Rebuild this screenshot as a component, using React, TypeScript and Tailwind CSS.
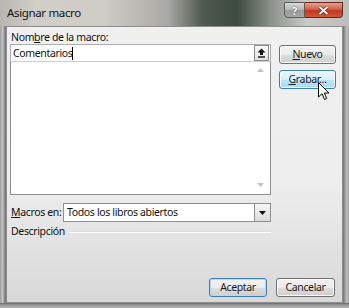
import React from "react";

const font = { fontFamily: '"Noto Sans", "Open Sans", sans-serif', letterSpacing: "-0.35px" };

function Btn({ children, variant = "normal", className = "" }: { children: React.ReactNode; variant?: "normal" | "hover" | "default"; className?: string }) {
  const base = "flex items-center justify-center rounded-[3px] text-[10.5px] text-[#1a1a1a] h-[19px] whitespace-nowrap";
  const v =
    variant === "hover"
      ? "border border-[#3c7fb1] bg-[linear-gradient(#eaf6fd_0%,#d9f0fc_50%,#bee6fd_51%,#a7d9f5_100%)] shadow-[inset_0_0_0_1px_#f4fbfe]"
      : variant === "default"
      ? "border border-[#3c7fb1] bg-[linear-gradient(#f2f2f2_0%,#ebebeb_50%,#dddddd_51%,#cfcfcf_100%)] shadow-[inset_0_0_0_1px_#aedbf1]"
      : "border border-[#707070] bg-[linear-gradient(#f2f2f2_0%,#ebebeb_50%,#dddddd_51%,#cfcfcf_100%)] shadow-[inset_0_0_0_1px_#fcfcfc]";
  return <div className={`${base} ${v} ${className}`}>{children}</div>;
}

export default function App() {
  return (
    <div className="w-[349px] h-[308px] overflow-hidden relative flex flex-col bg-[linear-gradient(90deg,#b8b6b2_0%,#d2cec8_10%,#cfcbc5_30%,#a9a9a5_48%,#4f5a50_58%,#3d4a40_68%,#8d958d_78%,#c9c9c7_88%,#bdbdbd_100%)]" style={font}>
      {/* Title bar */}
      <div className="h-[26px] flex items-start relative">
        <div className="pl-[7px] pt-[5px] text-[11.5px] leading-[16px] text-[#111]">Asignar macro</div>
        <div className="flex-1" />
        <div className="flex mt-[2px] mr-[6px]">
          <div className="w-[21px] h-[16px] rounded-bl-[4px] border border-[#5a5a5a] bg-[linear-gradient(#d8d8d8_0%,#b8b8b8_50%,#9a9a9a_51%,#a8a8a8_100%)] flex items-center justify-center text-white text-[11px] font-bold leading-none" style={{ textShadow: "0 0 2px #333" }}>?</div>
          <div className="w-[38px] h-[16px] rounded-br-[4px] border border-l-0 border-[#6b2518] bg-[linear-gradient(#e8a08e_0%,#d06048_45%,#c0391f_55%,#d2553a_100%)] flex items-center justify-center">
            <svg width="11" height="9" viewBox="0 0 11 9">
              <path d="M1.5 1 L9.5 8 M9.5 1 L1.5 8" stroke="#5a1a10" strokeWidth="3.2" />
              <path d="M1.5 1 L9.5 8 M9.5 1 L1.5 8" stroke="#fff" strokeWidth="2" />
            </svg>
          </div>
        </div>
      </div>

      <div className="flex flex-1">
        {/* left frame */}
        <div className="w-[6px] bg-[linear-gradient(90deg,#9a9a9a,#c4c4c4_40%,#8a8a8a_80%,#6c6c6c)]" />
        {/* client */}
        <div className="flex-1 flex flex-col border border-[#8e8e8e] bg-[linear-gradient(#f0f0f0_0%,#eeeeee_55%,#d8d8d8_100%)] px-[3px] pt-[3px] pb-[5px] relative">
          <div className="flex">
            {/* left column */}
            <div className="w-[261px] flex flex-col">
              <div className="h-[14px] leading-[14px] text-[10.5px] text-[#111] pl-[1px] whitespace-nowrap">
                Nom<span className="underline">b</span>re de la macro:
              </div>
              {/* input */}
              <div className="h-[18px] border border-[#abadb3] bg-white flex items-center relative">
                <span className="pl-[2px] text-[10.5px] text-[#111] leading-none">Comentarios</span>
                <span className="w-[1px] h-[13px] bg-black" />
                <div className="absolute right-[1px] top-[0px] w-[15px] h-[16px] border border-[#8a8a8a] bg-[linear-gradient(#fafafa,#e2e2e2)] flex items-center justify-center">
                  <svg width="9" height="10" viewBox="0 0 9 10">
                    <path d="M4.5 0.5 L8.5 4.5 L6 4.5 L6 7 L3 7 L3 4.5 L0.5 4.5 Z" fill="#111" />
                    <rect x="1" y="8.3" width="7" height="1.4" fill="#111" />
                  </svg>
                </div>
              </div>
              {/* list */}
              <div className="h-[134px] border border-[#8f8f8f] border-t-[#cfcfcf] bg-white relative -mt-[1px]">
                <svg className="absolute right-[6px] top-[6px]" width="7" height="4" viewBox="0 0 7 4">
                  <path d="M0 4 L3.5 0 L7 4 Z" fill="#c4c4c4" />
                </svg>
                <svg className="absolute right-[6px] bottom-[7px]" width="7" height="4" viewBox="0 0 7 4">
                  <path d="M0 0 L3.5 4 L7 0 Z" fill="#c4c4c4" />
                </svg>
              </div>
              {/* macros en */}
              <div className="flex items-center mt-[8px] h-[19px]">
                <div className="w-[53px] shrink-0 text-[10.5px] text-[#111] pl-[1px] whitespace-nowrap">
                  <span className="underline">M</span>acros en:
                </div>
                <div className="flex-1 h-[19px] border border-[#8f8f8f] bg-white flex items-center relative">
                  <span className="pl-[3px] text-[10.5px] text-[#111] whitespace-nowrap">Todos los libros abiertos</span>
                  <div className="absolute right-[0px] top-[0px] w-[16px] h-[17px] border-l border-[#8f8f8f] bg-[linear-gradient(#f6f6f6,#dcdcdc)] flex items-center justify-center">
                    <svg width="7" height="4" viewBox="0 0 7 4">
                      <path d="M0 0 L7 0 L3.5 4 Z" fill="#111" />
                    </svg>
                  </div>
                </div>
              </div>
              {/* descripcion */}
              <div className="flex items-center mt-[2px] h-[16px]">
                <span className="text-[10.5px] text-[#111] pl-[1px] whitespace-nowrap">Descripción</span>
                <div className="flex-1 ml-[4px] border-t border-[#dcdcdc] border-b border-b-white" />
              </div>
            </div>
            {/* right column */}
            <div className="ml-[8px] w-[57px] flex flex-col pt-[15px] gap-[6px]">
              <Btn>
                <span className="underline">N</span>uevo
              </Btn>
              <Btn variant="hover">
                <span className="underline">G</span>rabar...
              </Btn>
            </div>
          </div>
          <div className="flex-1" />
          <div className="flex justify-end gap-[9px] pr-[4px]">
            <Btn variant="default" className="w-[58px]">Aceptar</Btn>
            <Btn className="w-[59px]">Cancelar</Btn>
          </div>
          {/* mouse cursor */}
          <svg className="absolute left-[311px] top-[55px]" width="12" height="19" viewBox="0 0 12 19">
            <path d="M0.5 0.5 L0.5 15 L4 11.7 L6.5 17.5 L8.7 16.5 L6.3 11 L11 11 Z" fill="#fff" stroke="#000" strokeWidth="1" strokeLinejoin="round" />
          </svg>
        </div>
        {/* right frame */}
        <div className="w-[6px] bg-[linear-gradient(90deg,#707070,#a6a6a6_40%,#c2c2c2_70%,#9a9a9a)]" />
      </div>
      <div className="h-[5px] bg-[linear-gradient(#6a6a6a,#9a9a9a_40%,#b4b4b4)]" />
    </div>
  );
}
